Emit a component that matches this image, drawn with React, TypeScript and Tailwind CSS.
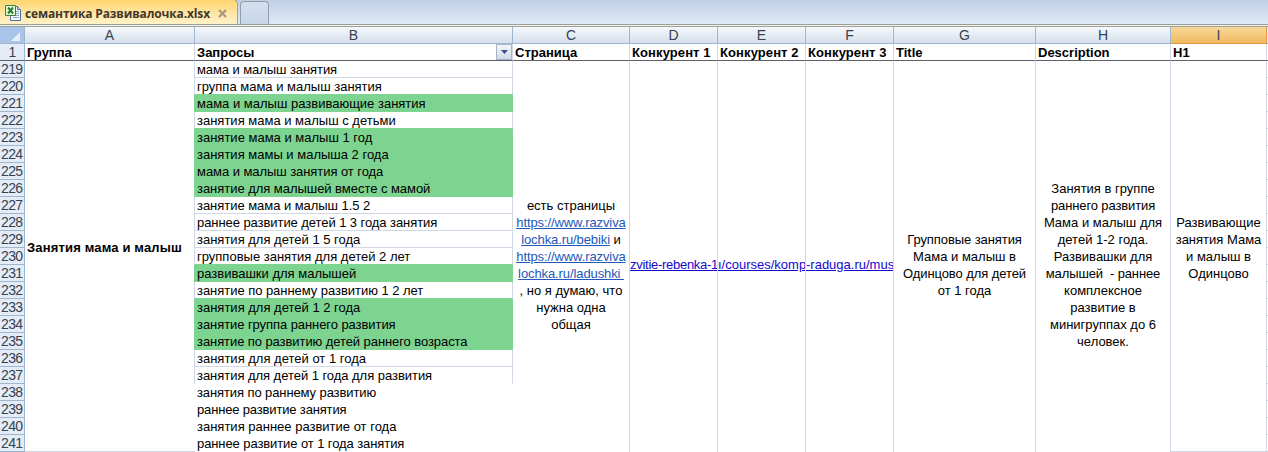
import type { ReactNode } from "react";
import clsx from "clsx";

type Query = { text: string; marked?: boolean; plain?: boolean; tracking?: string };

const queries: Query[] = [
  { text: "мама и малыш занятия", tracking: "tracking-[-0.08px]" },
  { text: "группа мама и малыш занятия" },
  { text: "мама и малыш развивающие занятия", marked: true },
  { text: "занятия мама и малыш с детьми" },
  { text: "занятие мама и малыш 1 год", marked: true },
  { text: "занятия мамы и малыша 2 года", marked: true },
  { text: "мама и малыш занятия от года", marked: true, tracking: "tracking-[-0.06px]" },
  { text: "занятие для малышей вместе с мамой", marked: true, tracking: "tracking-[-0.04px]" },
  { text: "занятие мама и малыш 1.5 2", tracking: "tracking-[-0.04px]" },
  { text: "раннее развитие детей 1 3 года занятия", tracking: "tracking-[-0.07px]" },
  { text: "занятия для детей 1 5 года" },
  { text: "групповые занятия для детей 2 лет" },
  { text: "развивашки для малышей", marked: true },
  { text: "занятие по раннему развитию 1 2 лет", tracking: "tracking-[-0.04px]" },
  { text: "занятия для детей 1 2 года", marked: true },
  { text: "занятие группа раннего развития", marked: true, tracking: "tracking-[-0.07px]" },
  { text: "занятие по развитию детей раннего возраста", marked: true, tracking: "tracking-[-0.08px]" },
  { text: "занятия для детей от 1 года" },
  { text: "занятия для детей 1 года для развития", tracking: "tracking-[-0.04px]" },
  { text: "занятия по раннему развитию", plain: true, tracking: "tracking-[-0.1px]" },
  { text: "раннее развитие занятия", plain: true, tracking: "tracking-[-0.16px]" },
  { text: "занятия раннее развитие от года", plain: true },
  { text: "раннее развитие от 1 года занятия", plain: true, tracking: "tracking-[-0.09px]" },
];

function ExcelIcon() {
  return (
    <svg width="16" height="16" viewBox="0 0 16 16" className="shrink-0">
      <path d="M5.5 1.5h7l3 3v11h-10z" fill="#f4f8fd" stroke="#526f9e" />
      <path d="M12.5 1.5v3h3" fill="#c8d8ec" stroke="#526f9e" />
      <path d="M10 6.5h4M10 8.5h4M8 10.5h6M8 12.5h6" stroke="#8ba5c9" />
      <path d="M.5.5h10v10h-10z" fill="#e8f5df" stroke="#37843a" />
      <path d="M3 2.5l5 6M8 2.5l-5 6" stroke="#25842b" strokeWidth="2" />
    </svg>
  );
}

function TabBar() {
  return (
    <div className="flex h-[27px] items-start border-b border-[#9aa39b] bg-linear-to-b from-[#bfd0e6] to-[#e2ebf7]">
      <div className="flex h-full w-full items-start border-b border-[#f4f3e4]">
        <div className="flex h-[25px] w-full items-end border-b border-[#9a9d99]">
          <div className="flex h-[25px] w-[238px] shrink-0 items-center rounded-tr-[5px] border-t border-r border-[#a4a294] bg-linear-to-b from-[#ffd66f] to-[#fff2c9] pt-[2px] pl-[5px]">
            <ExcelIcon />
            <span className="ml-1 w-[187px] whitespace-nowrap pt-px font-['Open_Sans',sans-serif] text-[12px] font-bold tracking-[-0.14px] text-[#42382c]">
              семантика Развивалочка.xlsx
            </span>
            <svg width="9" height="9" viewBox="0 0 9 9" className="ml-[6px]">
              <path d="M1 1l7 7M8 1L1 8" stroke="#a09583" strokeWidth="2" />
            </svg>
          </div>
          <div className="ml-[2px] h-[23px] w-[29px] rounded-t-[4px] border border-b-0 border-[#929dab] bg-linear-to-b from-[#d5e0ee] to-[#c7d6ea]" />
        </div>
      </div>
    </div>
  );
}

type ColumnProps = {
  letter: string;
  title: string;
  width: string;
  active?: boolean;
  filter?: boolean;
  line?: boolean;
  body?: string;
  tracking?: string;
  children: ReactNode;
};

function Column({ letter, title, width, active, filter, line = true, body, tracking, children }: ColumnProps) {
  return (
    <div className={clsx("flex shrink-0 flex-col", width)}>
      <div
        className={clsx(
          "flex h-[17px] items-center justify-center border-r border-b text-[14px] text-[#37424f]",
          active
            ? "border-[#e69544] bg-linear-to-b from-[#f8d79a] to-[#f0bb5e]"
            : "border-[#9eb6ce] bg-linear-to-b from-[#f6f9fc] to-[#d5dfeb]",
        )}
      >
        {letter}
      </div>
      <div className="flex h-[17px] items-center border-r border-b border-r-[#d0d7e5] border-b-[#606067] pl-[2px]">
        <span className={clsx("grow whitespace-nowrap pt-px text-[13px] font-bold", tracking)}>{title}</span>
        {filter && (
          <span className="flex h-4 w-4 shrink-0 items-center justify-center border border-[#a5b4c9] bg-linear-to-b from-[#f4f6fa] to-[#d1d9e5]">
            <svg width="7" height="4" viewBox="0 0 7 4">
              <path d="M0 0h7L3.5 4z" fill="#3b4b92" />
            </svg>
          </span>
        )}
      </div>
      <div className={clsx("h-[391px]", line && "border-r border-[#d0d7e5]", body)}>{children}</div>
    </div>
  );
}

function Line({ children, tracking }: { children: ReactNode; tracking?: string }) {
  return <div className={clsx("h-[17px] whitespace-pre leading-[17px]", tracking)}>{children}</div>;
}

function Url({ children }: { children: ReactNode }) {
  return <span className="tracking-[-0.1px] text-[#2458b8] underline">{children}</span>;
}

function Competitor({ children, tracking }: { children: ReactNode; tracking?: string }) {
  return (
    <div
      className={clsx(
        "overflow-hidden whitespace-nowrap leading-[17px] text-[#1408d0] underline",
        tracking,
      )}
    >
      {children}
    </div>
  );
}

export default function App() {
  return (
    <div className="h-[452px] w-[1268px] overflow-hidden bg-white font-['Liberation_Sans',Arial,sans-serif] text-[13px] text-black">
      <TabBar />
      <div className="flex">
        <div className="w-[25px] shrink-0 text-[14px] leading-[17px] tracking-[-0.6px] text-[#37424f]">
          <div className="flex h-[17px] items-end justify-end border-r border-b border-[#9eb6ce] bg-[#a9c4e9] pr-1 pb-[2px]">
            <svg width="9" height="9" viewBox="0 0 9 9">
              <path d="M9 0v9H0z" fill="#e5eef9" />
            </svg>
          </div>
          <div className="h-[17px] border-r border-b border-r-[#9eb6ce] border-b-[#606067] bg-[#e4ecf7] text-center">1</div>
          {queries.map((query, i) => (
            <div key={query.text} className="h-[17px] border-r border-b border-[#9eb6ce] bg-[#e4ecf7] pl-px">
              {219 + i}
            </div>
          ))}
        </div>

        <Column letter="A" title="Группа" width="w-[170px]" line={false} body="border-b border-b-[#d0d7e5] pt-[178px] pl-[2px]">
          <Line tracking="tracking-[0.16px]">
            <b>Занятия мама и малыш</b>
          </Line>
        </Column>

        <Column letter="B" title="Запросы" width="w-[318px]" filter line={false}>
          {queries.map(({ text, marked, plain, tracking }, i) => {
            const next = queries[i + 1];
            return (
              <div
                key={text}
                className={clsx(
                  "-ml-px h-[17px] whitespace-nowrap border-x border-b pl-[2px] leading-[17px]",
                  marked && "border-[#7dd491] bg-[#7dd491]",
                  plain && "border-transparent",
                  !marked && !plain && "border-x-[#d0d7e5]",
                  !marked && !plain && next?.marked && "border-b-[#7dd491]",
                  !marked && !plain && next?.plain && "border-b-transparent",
                  !marked && !plain && !next?.marked && !next?.plain && "border-b-[#d0d7e5]",
                  tracking,
                )}
              >
                {text}
              </div>
            );
          })}
        </Column>

        <Column letter="C" title="Страница" width="w-[117px]" body="pt-[136px] text-center">
          <Line>есть страницы</Line>
          <Line><Url>https://www.razviva</Url></Line>
          <Line><Url>lochka.ru/bebiki</Url> и</Line>
          <Line><Url>https://www.razviva</Url></Line>
          <Line><Url>{"lochka.ru/ladushki "}</Url></Line>
          <Line>, но я думаю, что</Line>
          <Line>нужна одна</Line>
          <Line>общая</Line>
        </Column>

        <Column letter="D" title="Конкурент 1" width="w-[88px]" tracking="tracking-[0.1px]" body="pt-[195px]">
          <Competitor tracking="tracking-[-0.28px]">zvitie-rebenka-1</Competitor>
        </Column>
        <Column letter="E" title="Конкурент 2" width="w-[88px]" tracking="tracking-[0.1px]" body="pt-[195px]">
          <Competitor>ı/courses/komp</Competitor>
        </Column>
        <Column letter="F" title="Конкурент 3" width="w-[88px]" tracking="tracking-[0.1px]" body="pt-[195px]">
          <Competitor>-raduga.ru/mus</Competitor>
        </Column>

        <Column letter="G" title="Title" width="w-[142px]" body="pt-[170px] text-center">
          <Line tracking="tracking-[-0.08px]">Групповые занятия</Line>
          <Line>Мама и малыш в</Line>
          <Line tracking="tracking-[-0.08px]">Одинцово для детей</Line>
          <Line>от 1 года</Line>
        </Column>

        <Column letter="H" title="Description" width="w-[135px]" body="pt-[119px] text-center">
          <Line>Занятия в группе</Line>
          <Line tracking="tracking-[-0.12px]">раннего развития</Line>
          <Line>Мама и малыш для</Line>
          <Line>детей 1-2 года.</Line>
          <Line>Развивашки для</Line>
          <Line tracking="tracking-[-0.12px]">{"малышей  - раннее"}</Line>
          <Line>комплексное</Line>
          <Line>развитие в</Line>
          <Line>минигруппах до 6</Line>
          <Line>человек.</Line>
        </Column>

        <Column letter="I" title="H1" width="w-[96px]" active body="border-b border-b-[#d0d7e5] pt-[153px] text-center">
          <Line>Развивающие</Line>
          <Line>занятия Мама</Line>
          <Line>и малыш в</Line>
          <Line>Одинцово</Line>
        </Column>

        <div className="w-px shrink-0">
          <div className="h-[17px] border-b border-[#9eb6ce] bg-[#e4ecf7]" />
          <div className="h-[17px] border-b border-[#606067]" />
          {queries.map((query) => (
            <div key={query.text} className="h-[17px] border-b border-[#d0d7e5]" />
          ))}
        </div>
      </div>
    </div>
  );
}
